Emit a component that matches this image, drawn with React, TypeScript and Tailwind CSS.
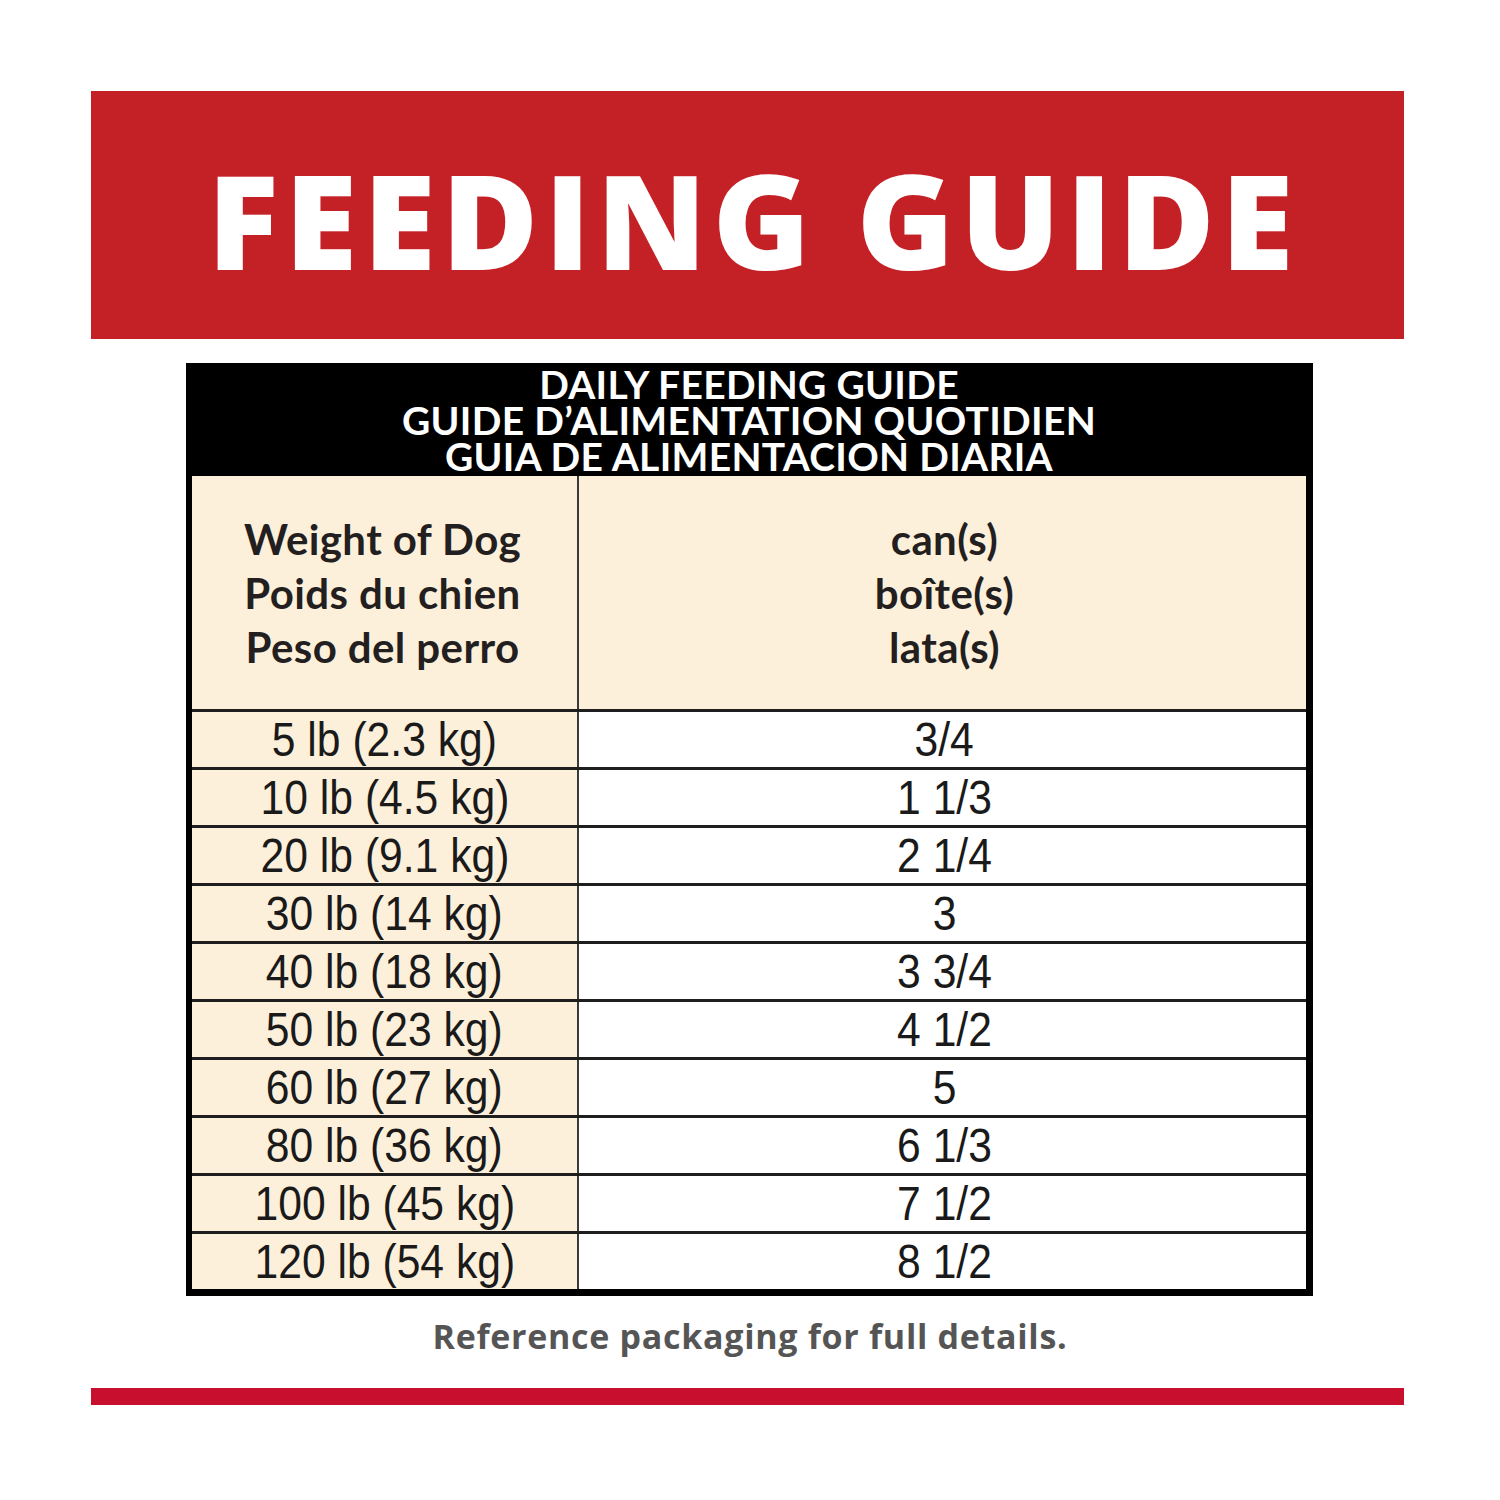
import React from 'react';

const rows: [string, string][] = [
  ['5 lb (2.3 kg)', '3/4'],
  ['10 lb (4.5 kg)', '1 1/3'],
  ['20 lb (9.1 kg)', '2 1/4'],
  ['30 lb (14 kg)', '3'],
  ['40 lb (18 kg)', '3 3/4'],
  ['50 lb (23 kg)', '4 1/2'],
  ['60 lb (27 kg)', '5'],
  ['80 lb (36 kg)', '6 1/3'],
  ['100 lb (45 kg)', '7 1/2'],
  ['120 lb (54 kg)', '8 1/2'],
];

const App: React.FC = () => {
  return (
    <div className="w-[1500px] h-[1500px] bg-white pt-[91px]">
      {/* title banner */}
      <div className="ml-[91px] w-[1313px] h-[248px] bg-[#c42127] flex items-center justify-center">
        <h1 className="text-white text-[132px] leading-none font-extrabold tracking-[6px] pt-[8px] pl-[12px] font-['Open_Sans',sans-serif]">
          FEEDING GUIDE
        </h1>
      </div>

      {/* table */}
      <div className="mt-[24px] ml-[186px] w-[1127px] border-x-[7px] border-b-[7px] border-l-[6px] border-black">
        <div className="h-[113px] bg-black flex flex-col items-center justify-center text-white font-bold text-[39px] leading-[36px] tracking-[0.3px] font-['Lato',sans-serif]">
          <div>DAILY FEEDING GUIDE</div>
          <div>GUIDE D’ALIMENTATION QUOTIDIEN</div>
          <div>GUIA DE ALIMENTACION DIARIA</div>
        </div>

        <div className="flex h-[233px] bg-[#fdf0da] font-['Lato',sans-serif] font-bold text-[#231f20] text-[42px] leading-[54px] tracking-[0.4px]">
          <div className="w-[387px] flex flex-col items-center justify-center border-r-[2px] border-[#3a3a3a] pr-[4px]">
            <div>Weight of Dog</div>
            <div>Poids du chien</div>
            <div>Peso del perro</div>
          </div>
          <div className="flex-1 flex flex-col items-center justify-center pl-[4px]">
            <div>can(s)</div>
            <div>boîte(s)</div>
            <div>lata(s)</div>
          </div>
        </div>

        {rows.map(([w, c]) => (
          <div
            key={w}
            className="flex h-[58px] border-t-[3px] border-[#1e1e1e] font-['Liberation_Sans',Arial,sans-serif] text-[49px] leading-none text-[#1a1a1a]"
          >
            <div className="w-[387px] bg-[#fdf0da] border-r-[2px] border-[#3a3a3a] flex items-center justify-center">
              <span className="inline-block scale-x-[0.87]">{w}</span>
            </div>
            <div className="flex-1 bg-white flex items-center justify-center pl-[4px]">
              <span className="inline-block scale-x-[0.87]">{c}</span>
            </div>
          </div>
        ))}
      </div>

      <p className="mt-[20px] text-center text-[#555555] font-bold text-[34px] leading-[40px] tracking-[0.7px] font-['Open_Sans',sans-serif]">
        Reference packaging for full details.
      </p>

      <div className="mt-[32px] ml-[91px] w-[1313px] h-[17px] bg-[#c8102e]" />
    </div>
  );
};

export default App;
